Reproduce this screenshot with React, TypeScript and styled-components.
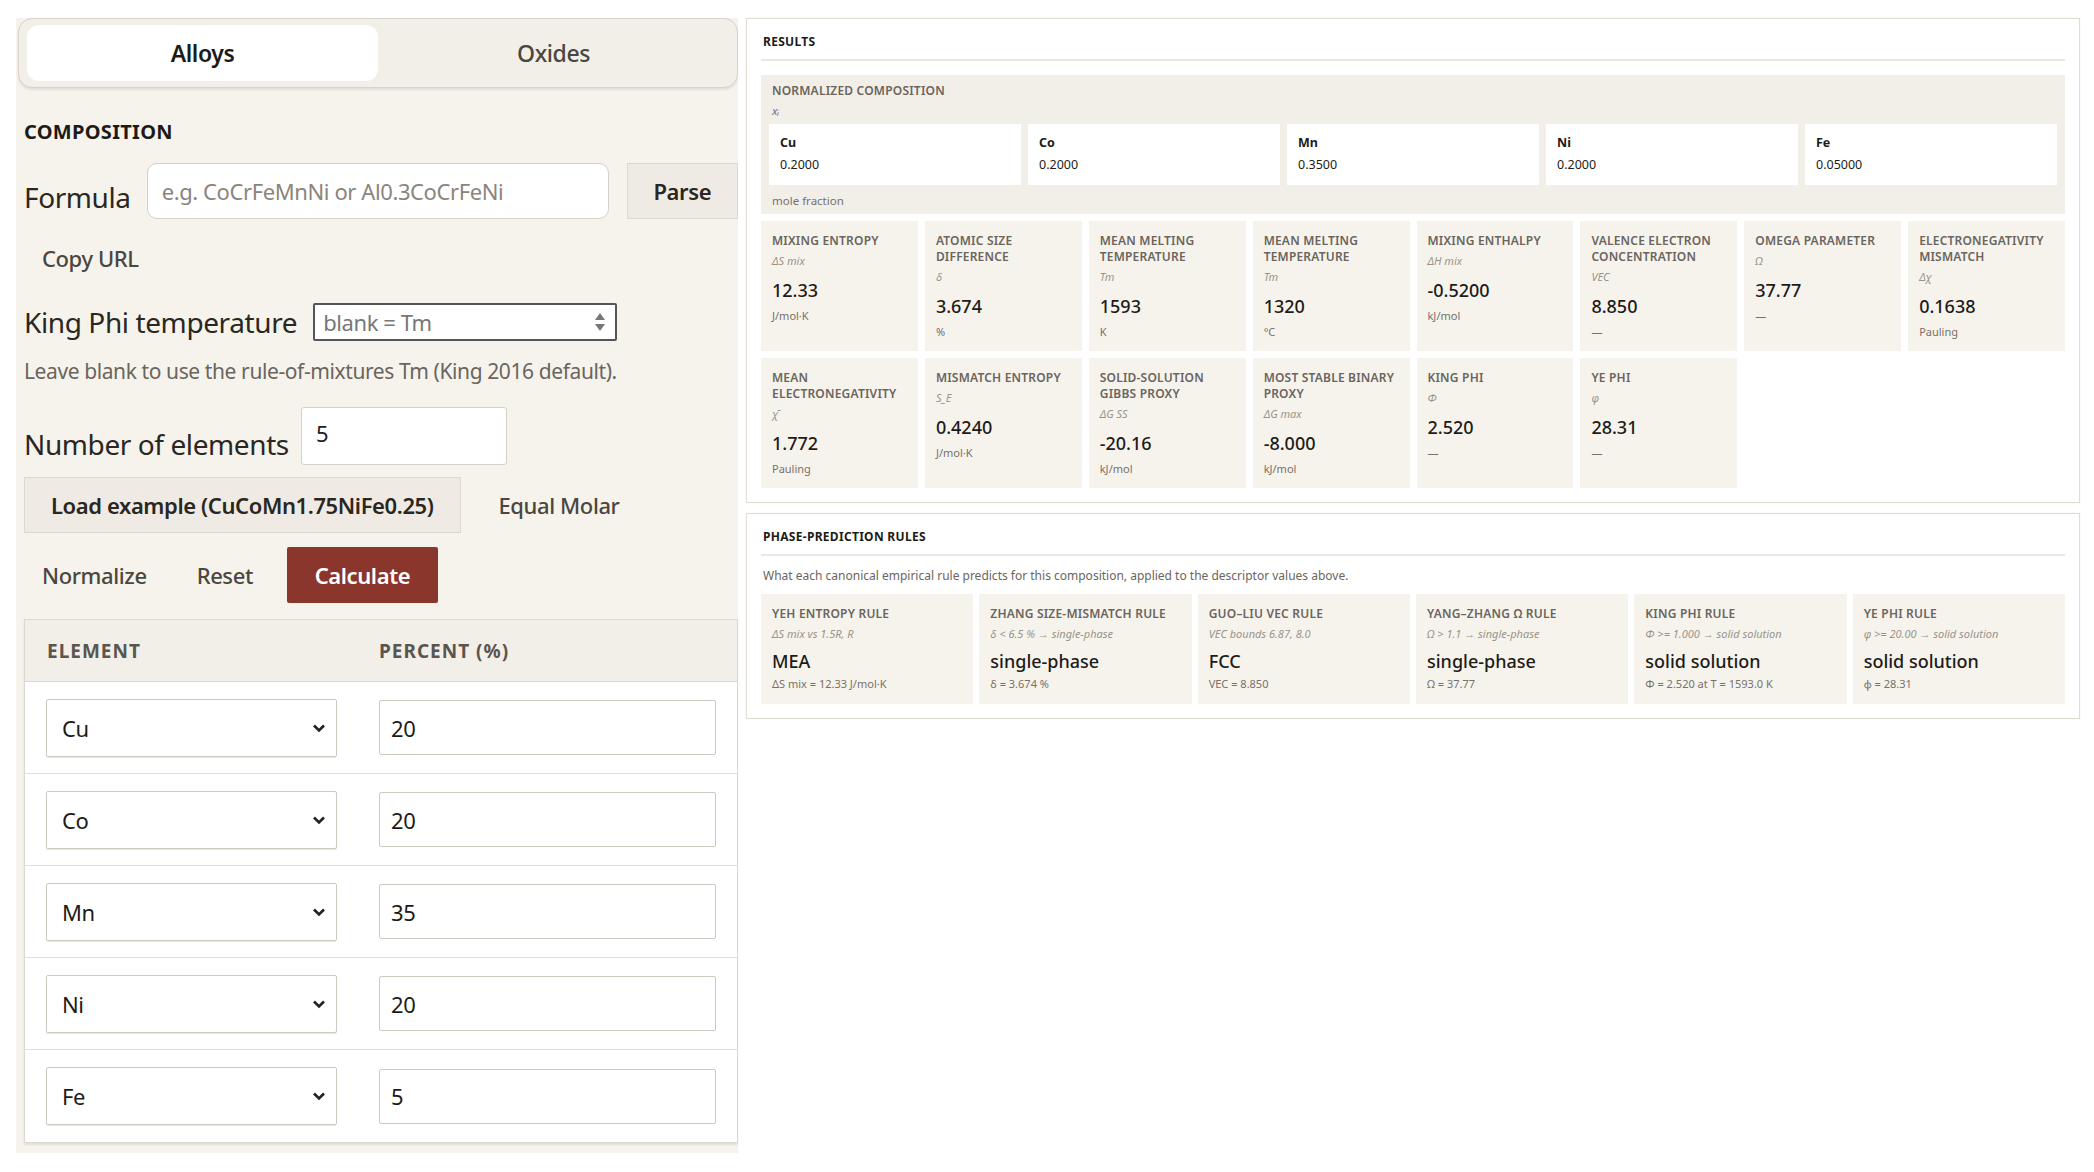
import React from "react";
import styled, { createGlobalStyle } from "styled-components";

const Global = createGlobalStyle`
  html, body { margin: 0; padding: 0; background: #ffffff; }
  body { font-family: "Noto Sans", "Open Sans", sans-serif; color: #1d1b18; }
  * { box-sizing: border-box; }
`;

const Page = styled.div`
  display: flex; gap: 8px; align-items: flex-start;
  padding: 18px 14px 0 16px; width: 2094px;
`;
const Left = styled.div`
  width: 722px; flex: none; background: #f6f3ed; padding: 0 0 10px 8px;
  display: flex; flex-direction: column; letter-spacing: -0.4px;
`;
const Tabs = styled.div`
  display: flex; margin-left: -6px; padding: 6px 8px; border: 1px solid #d8d3c9; border-radius: 14px;
  background: #f2efe8; height: 70px; box-shadow: 0 2px 2px rgba(0,0,0,0.08);
`;
const Tab = styled.div<{ $active?: boolean }>`
  flex: 1; display: flex; align-items: center; justify-content: center; border-radius: 12px;
  font-size: 23px; color: ${p => (p.$active ? "#1d1b18" : "#4a4640")};
  background: ${p => (p.$active ? "#ffffff" : "transparent")};
  font-weight: ${p => (p.$active ? 600 : 500)};
`;
const SectionTitle = styled.div`
  font-weight: 700; font-size: 20px; letter-spacing: 0.3px; margin: 30px 0 18px;
`;
const Row = styled.div<{ $gap?: number; $mt?: number }>`
  display: flex; align-items: center; gap: ${p => p.$gap ?? 18}px; margin-top: ${p => p.$mt ?? 0}px;
`;
const BigLabel = styled.span`
  font-size: 28px; color: #2a2722; white-space: nowrap;
`;
const TextInput = styled.div<{ $w: number; $h: number; $ph?: boolean; $radius?: number }>`
  width: ${p => p.$w}px; height: ${p => p.$h}px; background: #fff; border: 1px solid #d6d1c8;
  border-radius: ${p => p.$radius ?? 3}px; display: flex; align-items: center; padding: 0 14px;
  font-size: 22px; color: ${p => (p.$ph ? "#8a857d" : "#222")};
`;
const GrayBtn = styled.div<{ $w?: number; $h: number }>`
  ${p => (p.$w ? `width:${p.$w}px;` : "padding: 0 26px;")}
  height: ${p => p.$h}px; background: #efebe4; border: 1px solid #ddd8cf;
  display: flex; align-items: center; justify-content: center; font-size: 22px; font-weight: 600; color: #2a2722;
`;
const LinkBtn = styled.div`
  font-size: 22px; font-weight: 500; color: #4a4640; padding: 0 18px;
`;
const NumInput = styled.div`
  width: 304px; height: 38px; background: #fff; border: 2px solid #555; border-radius: 2px;
  display: flex; align-items: center; justify-content: space-between; padding: 0 8px; font-size: 22px; color: #777;
`;
const Hint = styled.div`
  font-size: 21px; color: #6a655d; margin-top: 16px;
`;
const CalcBtn = styled.div`
  width: 151px; height: 56px; background: #8b362c; color: #fff; display: flex; align-items: center;
  justify-content: center; font-size: 22px; font-weight: 600; border-radius: 2px;
`;
const Table = styled.div`
  margin-top: 16px; border: 1px solid #ddd8cf; background: #fff;
  box-shadow: 0 2px 2px rgba(0,0,0,0.08);
`;
const THead = styled.div`
  display: grid; grid-template-columns: 332px 1fr; height: 62px; align-items: center;
  background: #f2efe8; border-bottom: 1px solid #ddd8cf; padding-left: 22px;
  font-size: 19px; font-weight: 700; letter-spacing: 1px; color: #5a564f;
`;
const TRow = styled.div`
  display: grid; grid-template-columns: 291px 337px; gap: 42px; height: 92px; align-items: center;
  padding-left: 21px; border-bottom: 1px solid #e3dfd7;
  &:last-child { border-bottom: none; }
`;
const Select = styled.div`
  height: 58px; border: 1px solid #cfcac1; border-radius: 2px; display: flex; align-items: center;
  justify-content: space-between; padding: 0 10px 0 15px; font-size: 22px; box-shadow: 0 1px 1px rgba(0,0,0,0.1);
`;
const Field = styled.div`
  width: 337px; height: 55px; border: 1px solid #cfcac1; border-radius: 2px; display: flex; align-items: center;
  padding: 0 11px; font-size: 22px;
`;

const Right = styled.div`flex: 1; display: flex; flex-direction: column; gap: 10px;`;
const Panel = styled.div`
  background: #fff; border: 1px solid #e0dcd4; padding: 12px 14px 14px 14px; box-shadow: 0 0 2px rgba(0,0,0,0.06);
`;
const PanelTitle = styled.div`
  font-size: 12px; font-weight: 700; letter-spacing: 0.3px; padding: 2px 2px 9px; border-bottom: 2px solid #ebe8e2;
  margin-bottom: 14px;
`;
const CompBox = styled.div`
  background: #f2efe8; padding: 8px 8px 6px 8px; margin-bottom: 7px;
`;
const Small = styled.div<{ $italic?: boolean; $mt?: number }>`
  font-size: 11.5px; color: #777168; font-style: ${p => (p.$italic ? "italic" : "normal")};
  margin-top: ${p => p.$mt ?? 0}px; padding-left: 3px;
`;
const CardTitle = styled.div`
  font-size: 12px; color: #6a655d; font-weight: 600; letter-spacing: 0.2px; line-height: 16px;
`;
const CompGrid = styled.div`
  display: grid; grid-template-columns: repeat(5, 1fr); gap: 7px; margin: 6px 0 8px;
`;
const CompCard = styled.div`
  background: #fff; height: 61px; padding: 10px 11px; font-size: 12.5px;
  & b { display: block; margin-bottom: 5px; font-weight: 700; }
`;
const MetricGrid = styled.div`
  display: grid; grid-template-columns: repeat(8, 1fr); gap: 7px;
`;
const Card = styled.div<{ $h: number }>`
  background: #f6f3ed; min-height: ${p => p.$h}px; padding: 12px 11px; display: flex; flex-direction: column;
`;
const Sym = styled.div`font-size: 11px; font-style: italic; color: #999389; margin-top: 4px;`;
const Value = styled.div<{ $size?: number }>`
  font-size: ${p => p.$size ?? 18}px; font-weight: 500; color: #1d1b18; margin-top: 10px;
`;
const Unit = styled.div`font-size: 11px; color: #777168; margin-top: 6px;`;
const Desc = styled.div`font-size: 12px; color: #6a655d; margin: -3px 2px 10px;`;
const RuleGrid = styled.div`display: grid; grid-template-columns: repeat(6, 1fr); gap: 6px;`;

const Chevron = () => (
  <svg width="14" height="14" viewBox="0 0 14 14"><path d="M2 4.5 L7 9.5 L12 4.5" stroke="#222" strokeWidth="2.6" fill="none" /></svg>
);
const Spinner = () => (
  <svg width="14" height="22" viewBox="0 0 14 22"><path d="M7 2 L12 9 H2 Z" fill="#777" /><path d="M7 20 L12 13 H2 Z" fill="#777" /></svg>
);

const comps = [["Cu", "0.2000"], ["Co", "0.2000"], ["Mn", "0.3500"], ["Ni", "0.2000"], ["Fe", "0.05000"]];
const metrics1 = [
  ["MIXING ENTROPY", "ΔS mix", "12.33", "J/mol·K"],
  ["ATOMIC SIZE DIFFERENCE", "δ", "3.674", "%"],
  ["MEAN MELTING TEMPERATURE", "Tm", "1593", "K"],
  ["MEAN MELTING TEMPERATURE", "Tm", "1320", "°C"],
  ["MIXING ENTHALPY", "ΔH mix", "-0.5200", "kJ/mol"],
  ["VALENCE ELECTRON CONCENTRATION", "VEC", "8.850", "—"],
  ["OMEGA PARAMETER", "Ω", "37.77", "—"],
  ["ELECTRONEGATIVITY MISMATCH", "Δχ", "0.1638", "Pauling"],
];
const metrics2 = [
  ["MEAN ELECTRONEGATIVITY", "χ̄", "1.772", "Pauling"],
  ["MISMATCH ENTROPY", "S_E", "0.4240", "J/mol·K"],
  ["SOLID-SOLUTION GIBBS PROXY", "ΔG SS", "-20.16", "kJ/mol"],
  ["MOST STABLE BINARY PROXY", "ΔG max", "-8.000", "kJ/mol"],
  ["KING PHI", "Φ", "2.520", "—"],
  ["YE PHI", "φ", "28.31", "—"],
];
const rules = [
  ["YEH ENTROPY RULE", "ΔS mix vs 1.5R, R", "MEA", "ΔS mix = 12.33 J/mol·K"],
  ["ZHANG SIZE-MISMATCH RULE", "δ < 6.5 % → single-phase", "single-phase", "δ = 3.674 %"],
  ["GUO–LIU VEC RULE", "VEC bounds 6.87, 8.0", "FCC", "VEC = 8.850"],
  ["YANG–ZHANG Ω RULE", "Ω > 1.1 → single-phase", "single-phase", "Ω = 37.77"],
  ["KING PHI RULE", "Φ >= 1.000 → solid solution", "solid solution", "Φ = 2.520 at T = 1593.0 K"],
  ["YE PHI RULE", "φ >= 20.00 → solid solution", "solid solution", "φ = 28.31"],
];
const rows = [["Cu", "20"], ["Co", "20"], ["Mn", "35"], ["Ni", "20"], ["Fe", "5"]];

export default function App() {
  return (
    <>
      <Global />
      <Page>
        <Left>
          <Tabs>
            <Tab $active>Alloys</Tab>
            <Tab>Oxides</Tab>
          </Tabs>
          <SectionTitle>COMPOSITION</SectionTitle>
          <Row $gap={16}>
            <BigLabel style={{ marginTop: 12 }}>Formula</BigLabel>
            <TextInput $w={468} $h={56} $ph $radius={10}>e.g. CoCrFeMnNi or Al0.3CoCrFeNi</TextInput>
            <GrayBtn $w={113} $h={56} style={{ marginLeft: 2 }}>Parse</GrayBtn>
          </Row>
          <Row $mt={24}><LinkBtn>Copy URL</LinkBtn></Row>
          <Row $gap={16} $mt={30}>
            <BigLabel>King Phi temperature</BigLabel>
            <NumInput>blank = Tm<Spinner /></NumInput>
          </Row>
          <Hint>Leave blank to use the rule-of-mixtures Tm (King 2016 default).</Hint>
          <Row $gap={12} $mt={22}>
            <BigLabel style={{ marginTop: 16 }}>Number of elements</BigLabel>
            <TextInput $w={206} $h={58} style={{ alignItems: "flex-start", paddingTop: 10 }}>5</TextInput>
          </Row>
          <Row $gap={20} $mt={12}>
            <GrayBtn $h={56}>Load example (CuCoMn1.75NiFe0.25)</GrayBtn>
            <LinkBtn>Equal Molar</LinkBtn>
          </Row>
          <Row $gap={0} $mt={14}>
            <LinkBtn>Normalize</LinkBtn>
            <LinkBtn style={{ marginLeft: 14, marginRight: 16 }}>Reset</LinkBtn>
            <CalcBtn>Calculate</CalcBtn>
          </Row>
          <Table>
            <THead><span>ELEMENT</span><span>PERCENT (%)</span></THead>
            {rows.map(([el, v]) => (
              <TRow key={el}>
                <Select>{el}<Chevron /></Select>
                <Field>{v}</Field>
              </TRow>
            ))}
          </Table>
        </Left>
        <Right>
          <Panel>
            <PanelTitle>RESULTS</PanelTitle>
            <CompBox>
              <CardTitle style={{ paddingLeft: 3 }}>NORMALIZED COMPOSITION</CardTitle>
              <Small $italic $mt={4}>xᵢ</Small>
              <CompGrid>
                {comps.map(([e, v]) => (
                  <CompCard key={e}><b>{e}</b>{v}</CompCard>
                ))}
              </CompGrid>
              <Small>mole fraction</Small>
            </CompBox>
            <MetricGrid>
              {metrics1.map((m, i) => (
                <Card key={i} $h={128}>
                  <CardTitle>{m[0]}</CardTitle><Sym>{m[1]}</Sym><Value>{m[2]}</Value><Unit>{m[3]}</Unit>
                </Card>
              ))}
              {metrics2.map((m, i) => (
                <Card key={"b" + i} $h={128}>
                  <CardTitle>{m[0]}</CardTitle><Sym>{m[1]}</Sym><Value>{m[2]}</Value><Unit>{m[3]}</Unit>
                </Card>
              ))}
            </MetricGrid>
          </Panel>
          <Panel>
            <PanelTitle>PHASE-PREDICTION RULES</PanelTitle>
            <Desc>What each canonical empirical rule predicts for this composition, applied to the descriptor values above.</Desc>
            <RuleGrid>
              {rules.map((r, i) => (
                <Card key={i} $h={110}>
                  <CardTitle>{r[0]}</CardTitle><Sym>{r[1]}</Sym>
                  <Value $size={18} style={{ marginTop: 8 }}>{r[2]}</Value>
                  <Unit style={{ marginTop: 3 }}>{r[3]}</Unit>
                </Card>
              ))}
            </RuleGrid>
          </Panel>
        </Right>
      </Page>
    </>
  );
}
